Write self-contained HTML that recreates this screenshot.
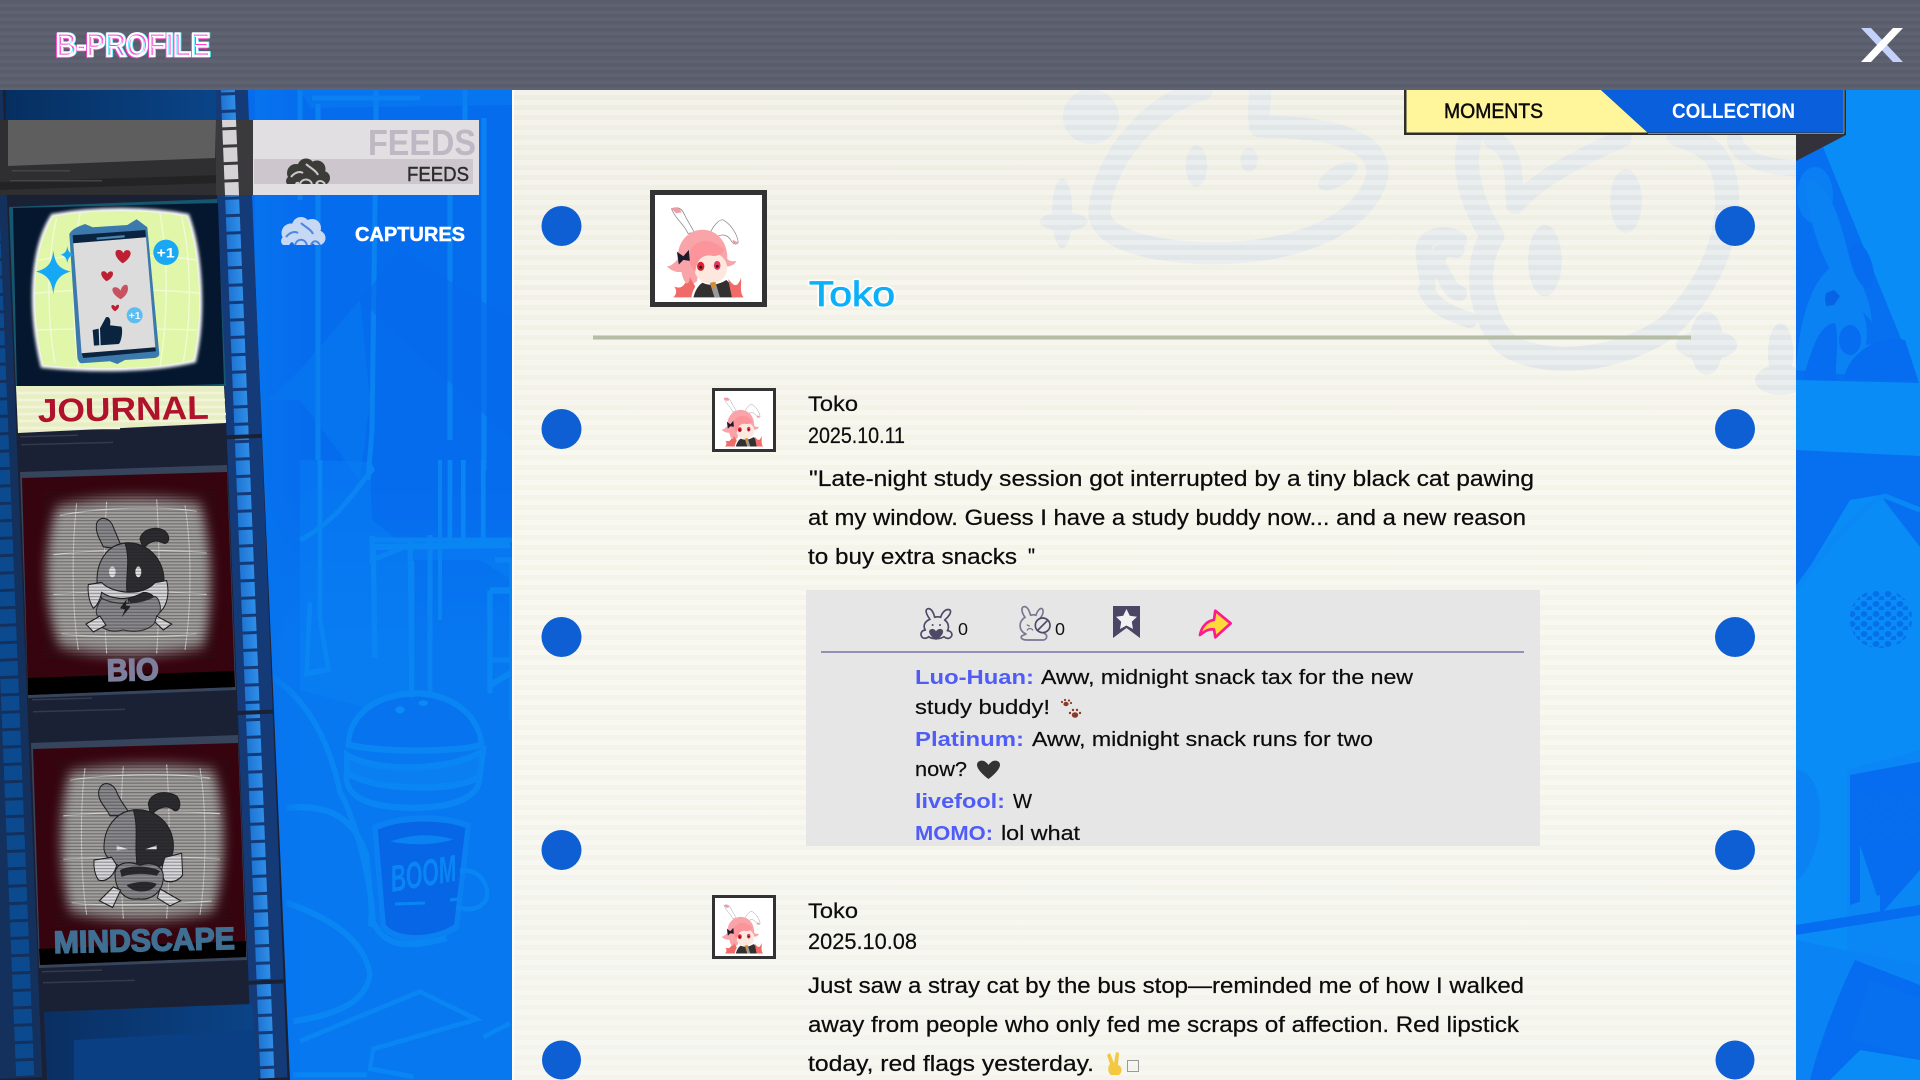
<!DOCTYPE html>
<html lang="en"><head><meta charset="utf-8"><title>B-Profile</title>
<style>
html,body{margin:0;padding:0;background:#0670ee;width:1920px;height:1080px;overflow:hidden}
svg{display:block;position:absolute;left:0;top:0}
text{font-family:"Liberation Sans",sans-serif}
.b{fill:#0c0c0c;font-size:22.5px;stroke:#0c0c0c;stroke-width:.25}
.c{fill:#0c0c0c;font-size:20px;stroke:#0c0c0c;stroke-width:.2}
.n{fill:#4f5cf5;font-size:20px;font-weight:700}
</style></head><body>
<svg width="1920" height="1080" viewBox="0 0 1920 1080" xmlns="http://www.w3.org/2000/svg">
<defs>
<pattern id="hs" width="8" height="7" patternUnits="userSpaceOnUse"><rect width="8" height="3.5" fill="#595d6b"/></pattern>
<pattern id="ps" width="8" height="10" patternUnits="userSpaceOnUse"><rect width="8" height="5" fill="#fff" fill-opacity=".3"/></pattern>
<pattern id="holes" width="30" height="17.4" patternUnits="userSpaceOnUse"><rect x="0" y="0" width="21" height="14.4" fill="url(#hg)"/></pattern>
<linearGradient id="hg" x1="0" x2="1" y1="0" y2="0"><stop offset="0" stop-color="#1668c8"/><stop offset="1" stop-color="#2f8ee8"/></linearGradient>
<pattern id="holesL" width="30" height="17.4" patternUnits="userSpaceOnUse"><rect width="21" height="14.4" fill="#0c4a90"/></pattern>
<pattern id="holesW" width="30" height="17.4" patternUnits="userSpaceOnUse"><rect width="21" height="14.4" fill="#d5d3d5"/></pattern>
<linearGradient id="paper" x1="0" x2="0" y1="0" y2="1"><stop offset="0" stop-color="#eeede2"/><stop offset=".4" stop-color="#f5f4e9"/><stop offset="1" stop-color="#f4f3ec"/></linearGradient>
<linearGradient id="fade" x1="0" x2="1" y1="0" y2="0"><stop offset="0" stop-color="#0773ee"/><stop offset="1" stop-color="#0773ee" stop-opacity="0"/></linearGradient>
<linearGradient id="bgv" x1="0" x2="0" y1="0" y2="1"><stop offset="0" stop-color="#056cee"/><stop offset=".45" stop-color="#056cee"/><stop offset=".6" stop-color="#0778f0"/><stop offset="1" stop-color="#0778f0"/></linearGradient>
<linearGradient id="topc" x1="0" x2="1" y1="0" y2="0"><stop offset="0" stop-color="#062f60"/><stop offset="1" stop-color="#0a4488"/></linearGradient>
<linearGradient id="lowc" x1="0" x2="1" y1="0" y2="0"><stop offset="0" stop-color="#0a2f62"/><stop offset="1" stop-color="#0a4488"/></linearGradient>
<filter id="bl3" x="-20%" y="-20%" width="140%" height="140%"><feGaussianBlur stdDeviation="5"/></filter>
<filter id="bl6" x="-20%" y="-20%" width="140%" height="140%"><feGaussianBlur stdDeviation="16"/></filter>
<pattern id="scan" width="8" height="8" patternUnits="userSpaceOnUse"><rect y="0" width="8" height="3" fill="#1a1a1a" fill-opacity=".36"/></pattern>
<pattern id="dots" width="12" height="10" patternUnits="userSpaceOnUse"><ellipse cx="4" cy="4" rx="3.4" ry="3" fill="#0670ea"/><ellipse cx="10" cy="9" rx="3.4" ry="3" fill="#0670ea"/></pattern>
<clipPath id="band"><rect x="0" y="120" width="262" height="75"/></clipPath>
<clipPath id="pan"><rect x="512" y="90" width="1284" height="990"/></clipPath>
<clipPath id="fi"><rect x="280" y="150" width="60" height="34"/></clipPath>
<clipPath id="ci"><rect x="275" y="210" width="60" height="35"/></clipPath>
<symbol id="toko" viewBox="0 0 117 117">
<rect width="117" height="117" fill="#fff"/>
<path d="M36 42C32 32 22 26 18 15C26 12 30 16 32 21C36 29 40 35 43 41Z" fill="#fff" stroke="#888" stroke-width=".8"/>
<path d="M18 15C23 12 27 14 29 19L23 20Z" fill="#f09aa4"/>
<path d="M60 42C64 33 70 27 74 27C82 31 90 42 91 52C88 56 84 52 82 48C78 43 72 42 66 47Z" fill="#fff" stroke="#888" stroke-width=".8"/>
<path d="M85 49L91 52L85 54Z" fill="#f09aa4"/>
<path d="M52 38C36 38 24 52 25 70C20 76 16 78 13 78C18 83 24 85 29 84C30 92 34 98 38 100L46 94L48 78L80 78C84 78 90 74 88 72C84 73 81 72 79 70C80 52 68 38 52 38Z" fill="#f9a4a8"/>
<ellipse cx="61" cy="80" rx="18" ry="17" fill="#fde8df"/>
<path d="M38 62C42 50 60 44 76 60C72 66 66 68 60 66C50 66 46 72 44 84C38 78 36 70 38 62Z" fill="#fb959b"/>
<ellipse cx="50" cy="78" rx="4" ry="5" fill="#d9222e"/><ellipse cx="68" cy="77" rx="3.6" ry="5" fill="#e3365a"/>
<circle cx="50" cy="79" r="1.6" fill="#4a1020"/><circle cx="68" cy="78" r="1.6" fill="#4a1020"/>
<path d="M24 62L31 67L37 60L38 72L31 71L26 76Z" fill="#1d1a2b"/>
<path d="M42 112C44 104 48 98 52 96C60 100 70 98 78 93C84 98 88 106 88 112Z" fill="#333030"/>
<path d="M60 96L65 112H71L66 95Z" fill="#9a9a9a"/><path d="M61 96L64 106L66 95Z" fill="#e08a20"/>
<path d="M20 112C24 108 24 104 21 100C26 102 30 102 33 96C36 98 38 96 38 90L44 100C42 104 40 108 40 112Z" fill="#f06a68"/>
<path d="M80 92C84 96 86 100 90 98C92 96 94 92 94 90C95 98 92 106 97 112H84Z" fill="#f06a68"/>
</symbol>
</defs>

<!-- base -->
<rect width="1920" height="1080" fill="url(#bgv)"/>

<!-- left background art -->
<g fill="none" stroke="#0a82f2" stroke-width="6">
<path d="M300 90V200M312 98H420M318 104V460" stroke-width="5"/>
<path d="M376 90V130L372 430L368 480" stroke-width="5"/>
<path d="M450 120V440M465 90V120M484 118V470" stroke-width="5"/>
</g>
<path d="M268 400L300 370L360 300L370 400L360 480L300 400Z" fill="#0a7ff0" opacity=".45"/>
<path d="M360 300L512 440V320L400 250Z" fill="#0668ea" opacity=".5"/>
<path d="M300 90L512 90L512 105L310 108Z" fill="#0a7df2" opacity=".5"/>
<path d="M300 460L370 462L372 520L398 540L512 545V580L480 560H410V720L300 690Z" fill="#0a84f4" opacity=".4"/>
<g fill="none" stroke="#0a84f3" stroke-width="5">
<path d="M372 536L372 560L410 545L412 720"/>
<path d="M300 540C340 520 362 480 372 470L368 462"/>
<path d="M374 540H512M430 535V720M495 560H512V720M490 660H512"/>
<path d="M440 460V620" stroke-width="4"/>
</g>
<!-- burger -->
<g transform="translate(0,460) scale(.3333,.3953)" fill="none" stroke="#0a86f4" stroke-width="16">
<path d="M1045 720C1050 640 1130 595 1240 590C1350 590 1435 640 1445 720C1380 740 1130 740 1045 720Z" fill="#0773ee"/>
<path d="M1040 745C1120 790 1350 790 1450 735L1440 800C1380 840 1120 840 1040 790Z" fill="#0a7ff2"/>
<path d="M1040 790C1030 850 1100 880 1240 880C1370 880 1440 850 1440 800"/>
<ellipse cx="1200" cy="632" rx="14" ry="9" fill="#0c8bf6" stroke="none"/><ellipse cx="1270" cy="615" rx="14" ry="7" fill="#0c8bf6" stroke="none"/>
<path d="M1125 930C1200 900 1330 900 1405 925L1370 1180C1300 1220 1190 1220 1150 1180Z" fill="#0666e6" stroke="#0a80f2"/>
<path d="M1170 965C1240 945 1300 945 1360 960C1300 975 1230 975 1170 965Z" fill="#0a82f2" stroke="none"/>
<path d="M1380 1040C1440 1030 1470 1080 1460 1110C1440 1140 1400 1140 1370 1130" stroke-width="12"/>
<path d="M800 540C900 590 980 680 1020 840C1060 900 1110 1040 1120 1170C1160 1240 1240 1230 1340 1210" stroke-width="16"/>
<path d="M860 880C980 870 1060 900 1100 1000C1110 1100 1120 1150 1110 1180"/>
<path d="M860 1120C960 1150 1090 1200 1110 1300C1100 1360 1040 1400 880 1420"/>
<path d="M900 1470L1260 1345L1430 1415L1120 1490L1110 1540L1240 1560M1450 1460L1530 1425M880 1555H1100" stroke-width="12"/>
<path d="M1120 220L1530 215M1120 220L1125 500M1235 255V600M1470 330V590M1470 330H1530M1470 570L1530 540"/>
<path d="M960 0V400L985 530L920 540L930 360" stroke-width="14"/>
<path d="M1350 0V200M1390 0V220M1450 0V215" stroke-width="14"/>
</g>
<text x="0" y="0" transform="translate(392,892) scale(1,1.25) rotate(-8)" font-style="italic" font-weight="700" font-size="30" fill="#0a86f4" textLength="66" lengthAdjust="spacingAndGlyphs">BOOM</text>
<path d="M395 904L425 903M450 900L458 899" stroke="#0a86f4" stroke-width="3"/>
<rect x="255" y="90" width="50" height="990" fill="url(#fade)"/>

<!-- right background art -->
<rect x="1796" y="90" width="124" height="990" fill="#0a8cf7"/>
<path d="M1796 160L1823 147L1919 383L1796 380Z" fill="#0670f0"/>
<g fill="#0a82f4">
<ellipse cx="1815" cy="195" rx="18" ry="28" fill="#0a7ff4"/>
<path d="M1805 180C1830 180 1840 220 1850 260C1865 290 1870 300 1872 322C1860 305 1840 300 1830 270C1815 240 1810 220 1805 180Z"/>
<path d="M1796 370C1800 310 1815 280 1830 268C1850 290 1872 310 1866 345L1900 340L1905 380Z"/>
</g>
<g fill="#066cf0">
<path d="M1803 379C1812 350 1818 325 1835 323C1840 340 1835 360 1836 380Z"/>
<ellipse cx="1850" cy="340" rx="11" ry="15"/>
<path d="M1843 380C1850 350 1880 335 1905 340L1918 380Z"/>
<path d="M1826 293L1834 290L1840 296L1834 305L1826 306L1825 299Z" fill="#0664e4"/>
<ellipse cx="1862" cy="265" rx="10" ry="24" transform="rotate(-18 1862 265)"/>
</g>
<path d="M1796 450L1920 456V547L1880 495L1850 500L1796 590Z" fill="#0670f0"/>
<path d="M1796 590C1830 540 1870 500 1885 496L1920 510" fill="none" stroke="#0a88f6" stroke-width="5"/>
<rect x="1850" y="590" width="62" height="58" rx="28" fill="url(#dots)"/>
<path d="M1847 770L1920 750V1000L1847 1000Z" fill="#0a86f5"/>
<path d="M1850 775L1920 762V870L1880 915L1880 895L1850 905Z" fill="#066cf0"/>
<rect x="1858" y="795" width="62" height="45" fill="url(#dots)" opacity=".8"/>
<path d="M1860 845L1880 905H1860Z" fill="#0a86f5"/>
<path d="M1796 770C1815 770 1825 800 1818 840C1810 870 1800 880 1796 880Z" fill="#0a82f4"/>
<path d="M1796 925L1920 905V915L1796 935Z" fill="#066cf0"/>
<path d="M1796 940L1920 965V1080H1796Z" fill="#0a84f4"/>
<path d="M1855 960L1920 985V1080H1810C1820 1040 1840 990 1855 960Z" fill="#066cf0"/>
<path d="M1870 980L1920 998V1060L1850 1040Z" fill="#0670ee"/>
<path d="M1830 1080L1860 1050L1920 1060V1080Z" fill="#0a8cf7"/>

<!-- film strip -->
<path d="M0 90H247L290 1080H0Z" fill="#1b2135"/>
<g transform="rotate(-2.3)">
<rect x="209" y="0" width="35" height="1088" fill="#143a78"/>
<rect x="217" y="0" width="21" height="1088" fill="url(#holes)"/>
<rect x="-45" y="0" width="44" height="1078" fill="#14305c"/>
<rect x="-27" y="0" width="21" height="1078" fill="url(#holesL)"/>
<rect x="209" y="444" width="35" height="4" fill="#1b2135"/>
<rect x="209" y="720" width="35" height="4" fill="#1b2135"/>
<rect x="209" y="990" width="35" height="4" fill="#1b2135"/>
</g>
<!-- top cell -->
<path d="M6 90H216L216 120H6Z" fill="url(#topc)"/>
<!-- low cell -->
<path d="M44 1012L252 1004L258 1080H47Z" fill="url(#lowc)"/>
<path d="M74 1040L254 1030L258 1080H74Z" fill="#0a3f84"/>

<!-- journal card -->
<path d="M9 207L217 199L226 386L16 392Z" fill="#14576f"/>
<path d="M13 208L218 203L224 384L17 390Z" fill="#04172e"/>
<g transform="scale(.3333)">
<path d="M160 650C300 625 450 630 560 650C600 760 610 950 580 1080C450 1110 280 1110 130 1095C95 950 90 760 160 650Z" fill="#fff" filter="url(#bl3)" stroke="#fff" stroke-width="18"/>
<path d="M160 650C300 625 450 630 560 650C600 760 610 950 580 1080C450 1110 280 1110 130 1095C95 950 90 760 160 650Z" fill="#e0f6a8"/>
<g fill="none" stroke="#f2fbd6" stroke-width="4">
<path d="M115 780C250 760 450 760 590 780M104 880C250 865 450 865 600 880M112 990C250 985 450 985 590 990"/>
<path d="M240 640C215 780 215 950 235 1100M480 640C505 780 505 950 480 1100M170 655C140 780 140 950 165 1090M545 650C575 780 575 950 550 1085"/>
</g>
<path d="M208 702C215 690 225 685 235 680L255 672L278 682L382 675L410 658L442 682L478 1062C478 1070 470 1072 465 1074L375 1080L352 1092L330 1084L245 1090C238 1090 232 1080 232 1070Z" fill="#3c79ad"/>
<path d="M218 706L436 690L438 714L220 732Z" fill="#0a2440"/>
<path d="M290 716L374 709" stroke="#4a84b0" stroke-width="7"/>
<path d="M220 730L438 712L466 1044L245 1062Z" fill="#dddcdc"/>
<path d="M245 1060L466 1042L468 1054L250 1074Z" fill="#0a2440"/>
<path d="M368 790C340 770 342 748 358 750C364 750 368 755 370 760C372 752 380 748 388 752C398 760 388 778 368 790Z" fill="#be1f33"/>
<path d="M320 844C300 830 300 812 312 814C316 814 320 818 322 822C324 816 332 812 338 816C342 826 334 836 320 844Z" fill="#be1f33"/>
<path d="M362 898C336 884 330 862 346 862C352 862 358 866 362 872C364 860 374 850 382 856C388 870 380 888 362 898Z" fill="#c8525f"/>
<path d="M345 934C335 928 330 916 338 915C342 915 344 918 346 920C348 916 354 912 357 916C358 924 352 930 345 934Z" fill="#be1f33"/>
<path d="M278 990L296 986L298 1036L282 1037Z" fill="#0a2440"/>
<path d="M300 985L318 952C326 948 334 956 330 976L364 980C370 990 364 1028 356 1032L302 1036Z" fill="#0a2440"/>
<circle cx="498" cy="757" r="38" fill="#1aa7f3"/>
<text x="470" y="772" font-size="42" font-weight="700" fill="#fff" textLength="54" lengthAdjust="spacingAndGlyphs">+1</text>
<circle cx="404" cy="946" r="24" fill="#5dbcf0"/>
<text x="386" y="957" font-size="30" font-weight="700" fill="#e9f6fc" textLength="36" lengthAdjust="spacingAndGlyphs">+1</text>
<path d="M160 752C165 790 175 805 212 815C175 825 165 845 160 882C155 845 145 825 108 815C145 805 155 790 160 752Z" fill="#17a8f5"/>
<path d="M202 738C204 752 208 760 222 764C208 768 204 776 202 790C200 776 196 768 182 764C196 760 200 752 202 738Z" fill="#17a8f5"/>
</g>
<!-- journal label -->
<path d="M16 386H224L226 423L18 433Z" fill="#e8eec4"/>
<g stroke="#f2f3d8" stroke-width="2.4"><path d="M17 393H224M17 400H225M17 407H225M18 414H226M18 421H226M18 428H120"/></g>
<text x="38" y="422" transform="rotate(-1.1 38 422)" font-size="33" font-weight="700" fill="#b0122c" textLength="171" lengthAdjust="spacingAndGlyphs">JOURNAL</text>
<g fill="#333a4c"><rect x="20" y="436" width="58" height="1.5" transform="rotate(-1.5 20 436)"/><rect x="21" y="444" width="92" height="1.5" transform="rotate(-1.5 21 444)"/></g>

<!-- bio card -->
<path d="M20 472L227 465L236 690L28 698Z" fill="#36445c"/>
<path d="M22 478L227 472L235 687L28 695Z" fill="#36040f"/>
<g transform="translate(0,460) scale(.3333,.3953)">
<path d="M170 120C300 90 480 90 600 110C640 220 640 380 610 470C480 500 300 500 180 470C130 380 130 220 170 120Z" fill="#a2a09e" filter="url(#bl6)"/>
<g fill="none" stroke="#d2d2d2" stroke-width="3"><path d="M180 140C300 120 480 115 590 130M160 240C300 225 480 225 620 235M160 340C300 330 480 330 620 340M185 440C300 450 480 450 590 440M230 110C215 220 215 370 235 480M320 105C310 220 310 370 320 490M470 100C480 220 480 370 470 490M555 115C575 220 575 370 555 480"/></g>
<path d="M290 160C300 140 330 145 340 170C355 200 362 215 368 225L310 220C300 200 285 185 290 160Z" fill="#8a8a8e" stroke="#222" stroke-width="3"/>
<path d="M420 200C425 175 470 165 495 180C515 195 505 215 490 210C470 200 445 205 430 225Z" fill="#2c2c30" stroke="#222" stroke-width="3"/>
<path d="M385 210C320 210 285 260 292 320C300 360 340 385 385 385Z" fill="#8a8a8e" stroke="#222" stroke-width="3"/>
<path d="M375 210C440 205 495 250 492 310C488 345 470 370 445 380C420 380 395 370 385 350C370 310 395 260 375 210Z" fill="#2e2e32" stroke="#222" stroke-width="3"/>
<ellipse cx="337" cy="283" rx="10" ry="14" fill="#e4e4e4"/><ellipse cx="415" cy="283" rx="9" ry="14" fill="#e4e4e4"/>
<path d="M265 315L305 310C340 340 430 345 465 310L500 305C510 340 500 370 480 385C470 350 460 335 430 335C380 360 330 350 305 335C300 355 290 370 280 375C268 360 262 335 265 315Z" fill="#d8d8dc" stroke="#222" stroke-width="3"/>
<path d="M305 350C290 370 280 390 300 400C290 420 320 440 370 430C420 440 470 425 470 395C490 385 480 350 465 345C420 365 350 370 305 350Z" fill="#8a8a8e" stroke="#333" stroke-width="3"/>
<path d="M380 352L360 375L375 378L365 398L392 370L378 368Z" fill="#222"/>
<path d="M258 415L300 395L318 418L280 435Z" fill="#dedee2" stroke="#222" stroke-width="3"/>
<path d="M470 395L515 415L490 430L465 410Z" fill="#dedee2" stroke="#222" stroke-width="3"/>
<rect x="130" y="80" width="520" height="420" fill="url(#scan)"/>
</g>
<path d="M28 678L234 671L235 687L28 695Z" fill="#000"/>
<text x="107" y="681" transform="rotate(-1.4 107 681)" font-size="31" font-weight="700" fill="#7d7f9c" stroke="#7d7f9c" stroke-width="1.6" textLength="52" lengthAdjust="spacingAndGlyphs">BIO</text>
<g fill="#333a4c"><rect x="32" y="699" width="60" height="1.5" transform="rotate(-1.5 32 699)"/><rect x="33" y="711" width="92" height="1.5" transform="rotate(-1.5 33 711)"/></g>

<!-- mindscape card -->
<path d="M31 743L238 735L247 960L39 968Z" fill="#36445c"/>
<path d="M33 749L238 743L246 957L40 965Z" fill="#36040f"/>
<g transform="translate(0,460) scale(.3333,.3953)">
<path d="M210 790C320 770 520 765 640 785C680 880 680 1040 640 1140C520 1170 320 1170 210 1140C175 1040 175 880 210 790Z" fill="#a2a09e" filter="url(#bl6)"/>
<g fill="none" stroke="#d2d2d2" stroke-width="3"><path d="M210 810C320 795 520 790 630 805M190 900C320 890 520 885 660 895M190 1010C320 1005 520 1000 660 1010M215 1120C320 1130 520 1125 635 1115M255 780C240 880 240 1040 260 1150M370 775C360 880 360 1040 370 1160M500 770C510 880 510 1040 500 1160M600 780C620 880 620 1040 600 1150"/></g>
<path d="M297 835C305 810 340 815 350 840C365 870 385 885 392 900L330 900C315 875 290 860 297 835Z" fill="#8a8a8e" stroke="#222" stroke-width="3"/>
<path d="M445 870C450 840 500 835 530 850C550 870 535 895 520 885C500 870 470 880 452 900Z" fill="#2c2c30" stroke="#222" stroke-width="3"/>
<path d="M410 885C350 885 310 930 312 985C320 1020 370 1035 410 1035Z" fill="#8a8a8e" stroke="#222" stroke-width="3"/>
<path d="M400 885C470 880 525 925 520 985C515 1020 480 1035 420 1035C395 1000 420 940 400 885Z" fill="#2e2e32" stroke="#222" stroke-width="3"/>
<path d="M350 975L385 985L350 988Z" fill="#e4e4e4"/><path d="M470 985L435 985L470 975Z" fill="#e4e4e4"/>
<path d="M282 1012L335 1005L350 1025C340 1060 310 1068 295 1062C285 1050 280 1030 282 1012Z" fill="#d8d8dc" stroke="#222" stroke-width="3"/>
<path d="M495 1005L545 995L548 1050C535 1065 515 1070 495 1065C480 1050 485 1030 495 1005Z" fill="#d8d8dc" stroke="#222" stroke-width="3"/>
<path d="M345 1045C350 1015 390 1015 420 1025C455 1015 490 1025 490 1055C490 1095 450 1115 415 1110C375 1115 345 1090 345 1045Z" fill="#8a8a8e" stroke="#222" stroke-width="3"/>
<path d="M360 1038C380 1025 450 1025 480 1040L470 1052C440 1045 390 1045 365 1055Z M380 1075C410 1065 450 1065 470 1072C460 1095 400 1100 380 1075Z" fill="#2a2a2e"/>
<path d="M298 1115L340 1080L362 1088L338 1132Z" fill="#dedee2" stroke="#222" stroke-width="3"/>
<path d="M480 1085L542 1115L510 1128L472 1108Z" fill="#dedee2" stroke="#222" stroke-width="3"/>
<rect x="170" y="760" width="520" height="420" fill="url(#scan)"/>
</g>
<path d="M39 949L246 941L246 957L40 965Z" fill="#000"/>
<text x="54" y="953" transform="rotate(-1.3 54 953)" font-size="31" font-weight="700" fill="#3f6f92" stroke="#3f6f92" stroke-width="1.6" textLength="181" lengthAdjust="spacingAndGlyphs">MINDSCAPE</text>
<g fill="#333a4c"><rect x="42" y="971" width="60" height="1.5" transform="rotate(-1.5 42 971)"/><rect x="43" y="982" width="92" height="1.5" transform="rotate(-1.5 43 982)"/></g>

<!-- feeds highlight band -->
<rect x="253" y="120" width="226" height="75" fill="#e1dfe1"/>
<rect x="0" y="120" width="253" height="75" fill="#2f2f31"/>
<path d="M8 120H216L215 158L8 166Z" fill="#5e5e5f"/>
<path d="M0 182L252 174V182L0 190Z" fill="#232324"/>
<rect x="216" y="120" width="37" height="75" fill="#3a3a3c"/>
<g clip-path="url(#band)"><g transform="rotate(-2.3)"><rect x="217" y="100" width="21" height="110" fill="url(#holesW)"/></g></g>
<rect x="12" y="170" width="58" height="1.5" fill="#454545"/><rect x="10" y="180" width="92" height="1.5" fill="#454545"/>
<rect x="254" y="159" width="219" height="25" fill="#cdc6cd"/>
<text x="368" y="155" font-size="36" font-weight="700" fill="#bdb8c3" textLength="108" lengthAdjust="spacingAndGlyphs">FEEDS</text>
<text x="407" y="181" font-size="20" fill="#2c2c2c" stroke="#2c2c2c" stroke-width=".4" textLength="62" lengthAdjust="spacingAndGlyphs">FEEDS</text>
<!-- brain icons -->
<g clip-path="url(#fi)">
<g fill="#3b3b38"><circle cx="296" cy="173" r="9"/><circle cx="306" cy="167" r="8.500"/><circle cx="317" cy="169" r="8.500"/><circle cx="323" cy="178" r="7"/><circle cx="291" cy="181" r="5"/><circle cx="308" cy="178" r="10"/></g>
<g fill="none" stroke="#cdc6cd" stroke-width="2"><path d="M291 177C295 172 300 171 303 173M306 164C310 168 316 170 318 175M300 184C302 178 310 178 312 184M316 184C318 180 322 180 325 184"/></g>
</g>
<g clip-path="url(#ci)">
<g fill="#c7d8f4"><circle cx="291" cy="233" r="9.500"/><circle cx="301" cy="226" r="9"/><circle cx="312" cy="228" r="9"/><circle cx="318" cy="238" r="7.500"/><circle cx="286" cy="241" r="5"/><circle cx="303" cy="238" r="11"/></g>
<g fill="none" stroke="#4a88e4" stroke-width="2"><path d="M286 237C290 232 295 231 298 233M301 223C305 227 311 229 313 234M295 245C297 238 305 238 307 245M311 245C313 240 317 240 320 245"/></g>
</g>
<text x="355" y="241" font-size="20" font-weight="700" fill="#fff" stroke="#fff" stroke-width=".5" textLength="110" lengthAdjust="spacingAndGlyphs">CAPTURES</text>

<!-- paper panel -->
<rect x="512" y="90" width="1284" height="990" fill="url(#paper)"/>
<rect x="512" y="90" width="2" height="990" fill="#fff" fill-opacity=".8"/>
<!-- watermark -->
<g clip-path="url(#pan)">
<g transform="translate(1000,90) scale(.5102,.3333)">
<g fill="none" stroke="#e1e6e8" stroke-linecap="round" stroke-linejoin="round">
<path vector-effect="non-scaling-stroke" stroke-width="22" d="M395 0C300 40 205 200 195 360C190 430 260 480 400 490C560 495 700 420 735 280C760 180 690 110 510 110C505 70 510 30 510 0"/>
<path vector-effect="non-scaling-stroke" stroke-width="24" d="M925 135C905 200 915 320 965 440C920 540 950 720 1000 770C1070 830 1210 820 1310 710C1400 580 1440 400 1420 260C1410 190 1380 160 1330 135"/>
<path vector-effect="non-scaling-stroke" stroke-width="18" d="M965 150C1015 180 1005 280 1010 345C1060 260 1140 200 1220 145"/>
<path vector-effect="non-scaling-stroke" stroke-width="16" d="M900 450C870 420 830 440 830 480C830 530 845 580 835 600C850 650 880 670 920 690M895 480C870 470 850 490 860 530C880 580 880 600 900 610"/>
<path vector-effect="non-scaling-stroke" stroke-width="16" d="M1440 150C1450 210 1500 230 1560 235"/>
</g>
<g fill="#e1e6e8">
<ellipse cx="385" cy="228" rx="21" ry="62"/><ellipse cx="488" cy="210" rx="17" ry="36"/>
<ellipse cx="662" cy="258" rx="25" ry="52" transform="rotate(40 662 258)"/>
<ellipse cx="178" cy="80" rx="55" ry="82"/>
<ellipse cx="122" cy="370" rx="20" ry="105"/><ellipse cx="125" cy="395" rx="47" ry="28"/>
<ellipse cx="1227" cy="333" rx="31" ry="96"/><ellipse cx="1068" cy="512" rx="33" ry="107"/>
<ellipse cx="1385" cy="760" rx="33" ry="95"/><ellipse cx="1385" cy="765" rx="60" ry="45"/>
<ellipse cx="1530" cy="790" rx="25" ry="90"/><ellipse cx="1530" cy="870" rx="50" ry="45"/>
</g>
</g>
</g>
<rect x="512" y="90" width="1284" height="990" fill="url(#ps)"/>

<!-- dots -->
<g fill="#0f5fd4">
<circle cx="561.500" cy="226" r="20"/><circle cx="561.500" cy="429" r="20"/><circle cx="561.500" cy="637" r="20"/><circle cx="561.500" cy="850" r="20"/><circle cx="561.500" cy="1060" r="19.500"/>
<circle cx="1735" cy="226" r="20"/><circle cx="1735" cy="429" r="20"/><circle cx="1735" cy="637" r="20"/><circle cx="1735" cy="850" r="20"/><circle cx="1735" cy="1060" r="19.500"/>
</g>

<!-- heading -->
<rect x="650" y="190" width="117" height="117" fill="#333"/>
<use href="#toko" x="655" y="195" width="107" height="107"/>
<text x="809" y="306" font-size="35" fill="#0bb0f8" stroke="#fff" stroke-width="4" paint-order="stroke" textLength="86" lengthAdjust="spacingAndGlyphs" style="stroke-linejoin:round">Toko</text>
<text x="809" y="306" font-size="35" fill="#0bb0f8" stroke="#0bb0f8" stroke-width=".8" textLength="86" lengthAdjust="spacingAndGlyphs">Toko</text>
<rect x="593" y="335.500" width="1098" height="4" fill="#b5bda6"/>

<!-- post 1 -->
<rect x="712" y="388" width="64" height="64" fill="#333"/>
<use href="#toko" x="715" y="391" width="58" height="58"/>
<text x="808" y="411" font-size="21" fill="#0c0c0c" stroke="#0c0c0c" stroke-width=".2" textLength="50" lengthAdjust="spacingAndGlyphs">Toko</text>
<text x="808" y="443" font-size="22" fill="#0c0c0c" stroke="#0c0c0c" stroke-width=".2" textLength="97" lengthAdjust="spacingAndGlyphs">2025.10.11</text>
<text class="b" x="809" y="486" textLength="725" lengthAdjust="spacingAndGlyphs">"Late-night study session got interrupted by a tiny black cat pawing</text>
<text class="b" x="808" y="525" textLength="718" lengthAdjust="spacingAndGlyphs">at my window. Guess I have a study buddy now... and a new reason</text>
<text class="b" x="808" y="564" textLength="209" lengthAdjust="spacingAndGlyphs">to buy extra snacks</text>
<text class="b" x="1028" y="564" textLength="7" lengthAdjust="spacingAndGlyphs">"</text>

<!-- comments -->
<rect x="806" y="590" width="734" height="256" fill="#e6e6e6"/>
<rect x="821" y="651" width="703" height="2" fill="#9490b5"/>
<g transform="translate(910,600) scale(.3333)" fill="none" stroke="#4e4a66" stroke-width="5" stroke-linejoin="round" stroke-linecap="round">
<path d="M60 58C48 42 44 28 54 26C64 24 72 40 74 52C80 50 86 50 92 52C96 38 108 24 120 30C126 38 114 52 104 60C116 68 118 84 112 92C124 92 130 104 122 112C116 118 106 114 102 110C90 118 66 118 56 110C50 116 38 118 34 108C30 98 38 90 46 90C38 78 44 64 60 58Z" fill="#e6e6e6"/>
<path d="M78 120C58 108 52 92 62 88C70 84 76 90 78 94C80 90 88 84 96 88C104 94 98 108 78 120Z" fill="#4e4a66" stroke="none"/>
<circle cx="68" cy="75" r="3" fill="#4e4a66" stroke="none"/><circle cx="90" cy="75" r="3" fill="#4e4a66" stroke="none"/>
</g>
<g transform="translate(910,600) scale(.3333)" fill="none" stroke="#8a87a0" stroke-width="5" stroke-linejoin="round" stroke-linecap="round">
<path d="M345 52C335 38 332 22 342 20C352 18 358 32 362 46C368 44 374 44 378 46C382 32 392 20 398 28C402 36 396 48 390 56" stroke="#7a7790"/>
<path d="M345 52C325 65 325 92 348 102L335 108C330 116 340 120 350 120H400C412 118 414 104 402 100" stroke="#7a7790"/>
<circle cx="398" cy="76" r="22" stroke="#4e4a66" fill="#e6e6e6"/>
<path d="M384 90L412 62" stroke="#4e4a66"/>
<path d="M352 75L358 78M352 90C356 84 364 84 368 90" stroke="#7a7790" stroke-width="4"/>
</g>
<text x="958" y="635" font-size="17.500" fill="#111" textLength="10" lengthAdjust="spacingAndGlyphs">0</text>
<text x="1055" y="635" font-size="17.500" fill="#111" textLength="10" lengthAdjust="spacingAndGlyphs">0</text>
<path d="M1113 606H1140V638L1126.500 628L1113 638Z" fill="#4b4566"/>
<path d="M1126.500 609L1129.800 615.800L1137 616.800L1131.800 621.800L1133 629L1126.500 625.500L1120 629L1121.200 621.800L1116 616.800L1123.200 615.800Z" fill="#f2f2f2"/>
<g transform="translate(910,600) scale(.3333)"><path d="M870 105C875 78 893 62 912 60L916 32L962 70L916 112L912 88C895 86 884 94 870 105Z" fill="#ffd93b" stroke="#ff1a8c" stroke-width="8" stroke-linejoin="round"/></g>

<text class="n" x="915" y="684" textLength="119" lengthAdjust="spacingAndGlyphs">Luo-Huan:</text>
<text class="c" x="1041" y="684" textLength="372" lengthAdjust="spacingAndGlyphs">Aww, midnight snack tax for the new</text>
<text class="c" x="915" y="714" textLength="135" lengthAdjust="spacingAndGlyphs">study buddy!</text>
<g fill="#8a3a2a">
<ellipse cx="1066" cy="704" rx="2.600" ry="2.200"/><circle cx="1062" cy="702" r="1.100"/><circle cx="1065" cy="700" r="1.100"/><circle cx="1069" cy="700.500" r="1.100"/><circle cx="1071" cy="703" r="1.100"/>
<ellipse cx="1075" cy="715" rx="3.200" ry="2.800"/><circle cx="1070" cy="713" r="1.200"/><circle cx="1073" cy="710" r="1.200"/><circle cx="1077" cy="710" r="1.200"/><circle cx="1080" cy="713" r="1.200"/>
</g>
<text class="n" x="915" y="746" textLength="109" lengthAdjust="spacingAndGlyphs">Platinum:</text>
<text class="c" x="1032" y="746" textLength="341" lengthAdjust="spacingAndGlyphs">Aww, midnight snack runs for two</text>
<text class="c" x="915" y="776" textLength="52" lengthAdjust="spacingAndGlyphs">now?</text>
<path d="M988.500 779C979 772 977 767 977 765C977 761 981 760 984 761C986 762 988 764 988.500 765C989 764 991 762 993 761C996 760 1000 761 1000 765C1000 767 998 772 988.500 779Z" fill="#333"/>
<text class="n" x="915" y="808" textLength="90" lengthAdjust="spacingAndGlyphs">livefool:</text>
<text class="c" x="1013" y="808" textLength="19" lengthAdjust="spacingAndGlyphs">W</text>
<text class="n" x="915" y="840" textLength="78" lengthAdjust="spacingAndGlyphs">MOMO:</text>
<text class="c" x="1001" y="840" textLength="79" lengthAdjust="spacingAndGlyphs">lol what</text>

<!-- post 2 -->
<rect x="712" y="895" width="64" height="64" fill="#333"/>
<use href="#toko" x="715" y="898" width="58" height="58"/>
<text x="808" y="918" font-size="21" fill="#0c0c0c" stroke="#0c0c0c" stroke-width=".2" textLength="50" lengthAdjust="spacingAndGlyphs">Toko</text>
<text x="808" y="949" font-size="22" fill="#0c0c0c" stroke="#0c0c0c" stroke-width=".2" textLength="109" lengthAdjust="spacingAndGlyphs">2025.10.08</text>
<text class="b" x="808" y="993" textLength="716" lengthAdjust="spacingAndGlyphs">Just saw a stray cat by the bus stop—reminded me of how I walked</text>
<text class="b" x="808" y="1032" textLength="711" lengthAdjust="spacingAndGlyphs">away from people who only fed me scraps of affection. Red lipstick</text>
<text class="b" x="808" y="1071" textLength="286" lengthAdjust="spacingAndGlyphs">today, red flags yesterday.</text>
<path d="M1110 1053L1114 1063L1116 1052L1119 1053L1118 1065C1122 1066 1123 1072 1119 1075H1111C1107 1072 1108 1066 1110 1064L1107 1055Z" fill="#f5c842"/>
<rect x="1127.500" y="1060.500" width="11" height="11" fill="none" stroke="#999" stroke-width="1"/>

<!-- header -->
<rect width="1920" height="90" fill="#5f6371"/>
<rect width="1920" height="90" fill="url(#hs)"/>
<text x="56" y="56" font-size="32" font-weight="700" fill="#fff" stroke="#fff" stroke-width="2.200" textLength="154" lengthAdjust="spacingAndGlyphs" style="text-shadow:-1px 1px 0 #ff3fd0,1px 0 0 #4ff0ff">B-PROFILE</text>
<path d="M1861 28H1871L1903 62H1893Z" fill="#c4d2fb"/>
<path d="M1893 28H1903L1871 62H1861Z" fill="#fff"/>

<!-- tabs -->
<path d="M1796 135H1846L1796 161Z" fill="#33323a"/>
<path d="M1404 90H1846V135H1404Z" fill="#2e2e2e"/>
<path d="M1406.500 90H1601L1647.500 132.500H1406.500Z" fill="#fff59a"/>
<path d="M1601 90H1843.500V132.500H1647.500Z" fill="#0a60dc"/>
<rect x="1843.500" y="90" width="1" height="43" fill="#8e8e6a"/>
<rect x="1648" y="133" width="196" height="1" fill="#8e8e6a"/>
<text x="1444" y="118" font-size="21" fill="#0c0c0c" stroke="#0c0c0c" stroke-width=".5" textLength="99" lengthAdjust="spacingAndGlyphs">MOMENTS</text>
<text x="1672" y="118" font-size="21" font-weight="700" fill="#fff" textLength="123" lengthAdjust="spacingAndGlyphs">COLLECTION</text>
</svg>
</body></html>
